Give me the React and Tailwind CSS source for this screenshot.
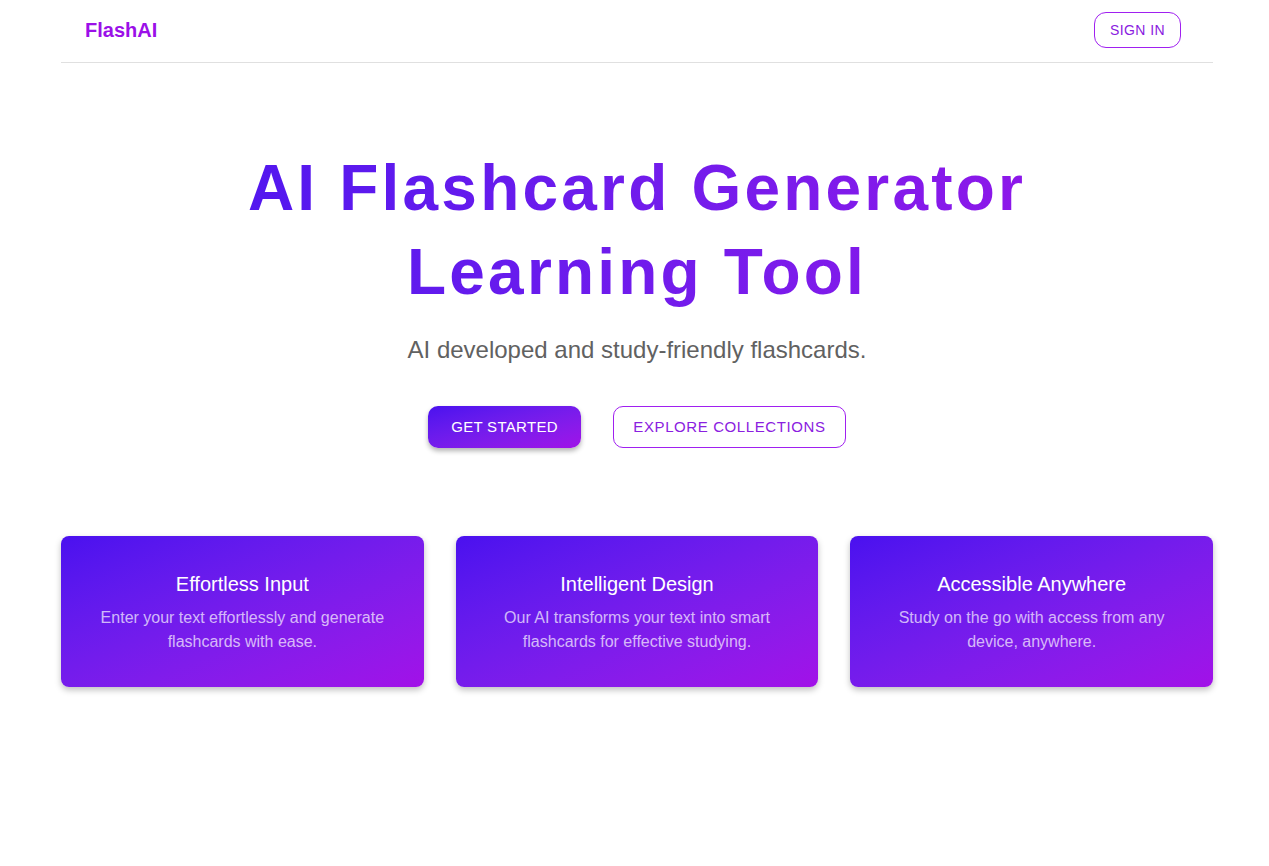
const features = [
  {
    title: 'Effortless Input',
    text: 'Enter your text effortlessly and generate flashcards with ease.',
  },
  {
    title: 'Intelligent Design',
    text: 'Our AI transforms your text into smart flashcards for effective studying.',
  },
  {
    title: 'Accessible Anywhere',
    text: 'Study on the go with access from any device, anywhere.',
  },
];

const FeatureCard = ({ title, text }) => (
  <div className="flex flex-col items-center rounded-lg bg-gradient-to-br from-[#4a10ef] to-[#a210e8] px-8 pt-8 pb-[33px] text-center shadow-[0_3px_6px_rgba(0,0,0,0.25)]">
    <h3 className="text-[20px] leading-8 text-white">{title}</h3>
    <p className="mt-1.5 text-[16px] leading-6 text-white/70">{text}</p>
  </div>
);

export default function App() {
  return (
    <div className="min-h-[866px] w-full bg-white font-['Liberation_Sans',Arial,sans-serif]">
      <div className="ml-[61px] w-[1152px]">
        <nav className="flex h-[63px] items-center justify-between border-b border-[#e0e0e0] pb-[2px] pl-6 pr-8">
          <span className="text-[20px] font-bold text-[#9b10e8]">FlashAI</span>
          <button className="h-9 rounded-xl border border-[#a020f0] px-[15px] text-[14px] tracking-[0.03em] text-[#8a20e0]">
            SIGN IN
          </button>
        </nav>

        <section className="flex flex-col items-center pt-[83px]">
          <h1 className="w-full bg-gradient-to-r from-[#4410f0] to-[#9a10e8] bg-clip-text text-center text-[64px] font-bold leading-[84px] tracking-[0.05em] text-transparent">
            AI Flashcard Generator
            <br />
            Learning Tool
          </h1>
          <p className="mt-5 text-[24px] leading-8 text-[#616161]">
            AI developed and study-friendly flashcards.
          </p>
          <div className="mt-10 flex gap-8">
            <button className="h-[42px] w-[153px] rounded-[10px] bg-gradient-to-br from-[#4a10ef] to-[#a010e8] text-[15px] tracking-[0.02em] text-white shadow-[0_3px_5px_rgba(0,0,0,0.3)]">
              GET STARTED
            </button>
            <button className="h-[42px] w-[233px] rounded-[10px] border border-[#a020f0] text-[15px] tracking-[0.04em] text-[#8a20e0]">
              EXPLORE COLLECTIONS
            </button>
          </div>
        </section>

        <section className="mt-[88px] grid grid-cols-3 gap-8">
          {features.map(f => (
            <FeatureCard key={f.title} title={f.title} text={f.text} />
          ))}
        </section>
      </div>
    </div>
  );
}
